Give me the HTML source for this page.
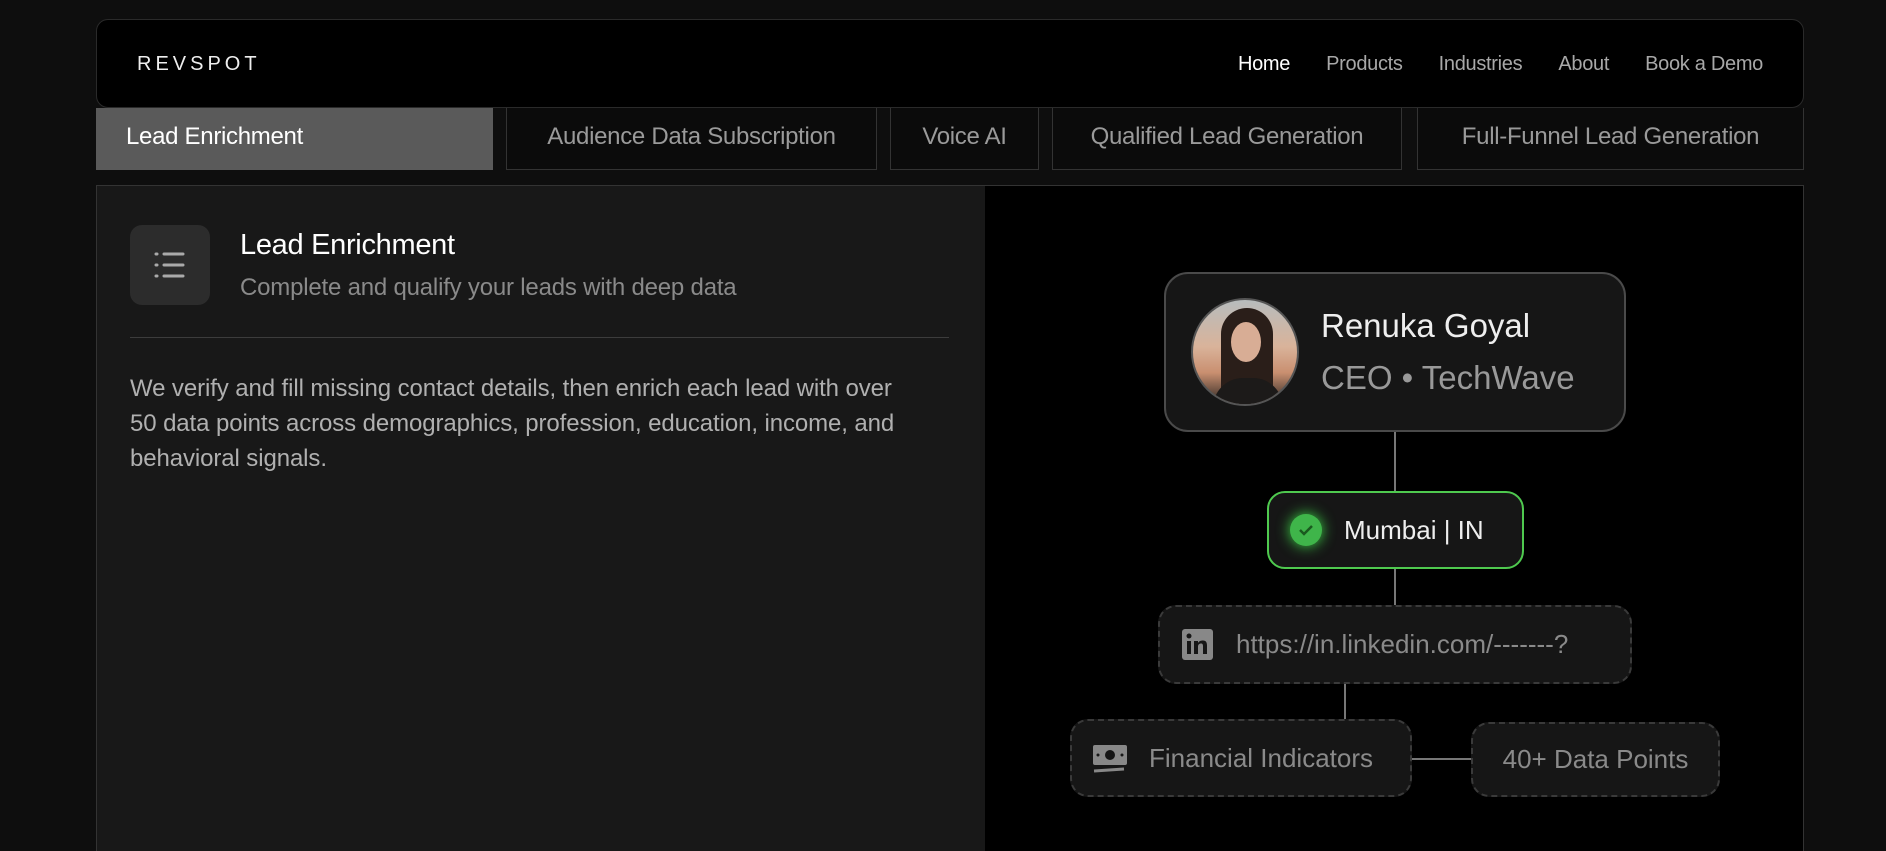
<!DOCTYPE html>
<html><head><meta charset="utf-8"><style>
*{margin:0;padding:0;box-sizing:border-box}
html,body{width:1886px;height:851px;overflow:hidden}
body{background:#0e0e0e;font-family:"Liberation Sans",sans-serif;position:relative;color:#fff}
.abs{position:absolute}
.nav{left:96px;top:19px;width:1708px;height:89px;background:#000;border:1px solid #2a2a2a;border-radius:12px}
.logo{left:40px;top:33px;font-size:20px;letter-spacing:4px;font-weight:300;color:#eee}
.links{right:40px;top:33px;font-size:20px;color:#a8a8a8;display:flex;gap:36px;letter-spacing:-0.3px}
.tab{top:108px;height:62px;border:1px solid #333;border-top:none;background:#0b0b0b;color:#9a9a9a;font-size:24px;display:flex;align-items:center;justify-content:center;letter-spacing:-0.3px;padding-bottom:4px}
.panel{left:96px;top:185px;width:1708px;height:700px;border:1px solid #333;background:#181818}
.right{left:985px;top:186px;width:818px;height:700px;background:#000}
.box{background:#161616;border-radius:18px}
.dash{border:2px dashed #3a3a3a;color:#8a8a8a;font-size:26px;display:flex;align-items:center}
.vl{background:#777;width:2px}
</style></head><body>
<div class="abs nav"><div class="abs logo">REVSPOT</div>
<div class="abs links"><span style="color:#fff">Home</span><span>Products</span><span>Industries</span><span>About</span><span>Book a Demo</span></div></div>
<div class="abs tab" style="left:96px;width:397px;background:#5a5a5a;border:none;color:#fff;justify-content:flex-start;padding-left:30px">Lead Enrichment</div>
<div class="abs tab" style="left:506px;width:371px">Audience Data Subscription</div>
<div class="abs tab" style="left:890px;width:149px">Voice AI</div>
<div class="abs tab" style="left:1052px;width:350px">Qualified Lead Generation</div>
<div class="abs tab" style="left:1417px;width:387px">Full-Funnel Lead Generation</div>
<div class="abs panel"></div>
<div class="abs right"></div>
<div class="abs" style="left:130px;top:225px;width:80px;height:80px;background:#2c2c2c;border-radius:12px">
<svg width="80" height="80" viewBox="0 0 80 80"><g stroke="#aaa" stroke-width="3" stroke-linecap="round"><line x1="26" y1="29" x2="27" y2="29"/><line x1="26" y1="40" x2="27" y2="40"/><line x1="26" y1="51" x2="27" y2="51"/><line x1="34" y1="29" x2="53" y2="29"/><line x1="34" y1="40" x2="53" y2="40"/><line x1="34" y1="51" x2="53" y2="51"/></g></svg></div>
<div class="abs" style="left:240px;top:229px;font-size:29px;letter-spacing:-0.3px">Lead Enrichment</div>
<div class="abs" style="left:240px;top:274px;font-size:24px;color:#8a8a8a;letter-spacing:-0.2px">Complete and qualify your leads with deep data</div>
<div class="abs" style="left:130px;top:337px;width:819px;height:1px;background:#3c3c3c"></div>
<div class="abs" style="left:130px;top:371px;width:770px;font-size:24px;line-height:35px;color:#b0b0b0;letter-spacing:-0.1px">We verify and fill missing contact details, then enrich each lead with over 50 data points across demographics, profession, education, income, and behavioral signals.</div>

<div class="abs vl" style="left:1394px;top:432px;height:59px"></div>
<div class="abs vl" style="left:1394px;top:569px;height:36px"></div>
<div class="abs vl" style="left:1344px;top:684px;height:36px"></div>
<div class="abs" style="left:1412px;top:758px;width:59px;height:2px;background:#777"></div>

<div class="abs box" style="left:1164px;top:272px;width:462px;height:160px;border:2px solid #4a4a4a;border-radius:24px"></div>
<div class="abs" style="left:1191px;top:298px;width:108px;height:108px;border-radius:50%;border:2px solid #555;overflow:hidden;background:linear-gradient(180deg,#b7bcbd 0%,#d9b39a 45%,#c98f70 70%,#2a2420 100%)">
<div class="abs" style="left:28px;top:8px;width:52px;height:100px;border-radius:26px 26px 10px 10px;background:#2a1e19"></div>
<div class="abs" style="left:38px;top:22px;width:30px;height:40px;border-radius:50%;background:#d8ad95"></div>
<div class="abs" style="left:20px;top:78px;width:70px;height:40px;border-radius:30px 30px 0 0;background:#1c1a19"></div>
</div>
<div class="abs" style="left:1321px;top:307px;font-size:33px;color:#eee">Renuka Goyal</div>
<div class="abs" style="left:1321px;top:359px;font-size:33px;color:#999">CEO • TechWave</div>

<div class="abs box" style="left:1267px;top:491px;width:257px;height:78px;border:2px solid #4fc94f;font-size:26px;display:flex;align-items:center;padding-left:75px;color:#eee">Mumbai | IN</div>
<div class="abs" style="left:1290px;top:514px;width:32px;height:32px;border-radius:50%;background:#3fb54a;box-shadow:0 0 14px #3fdc4a">
<svg width="32" height="32"><path d="M10 16l4 4 8-8" stroke="#1a5a1f" stroke-width="2.5" fill="none"/></svg></div>

<div class="abs box dash" style="left:1158px;top:605px;width:474px;height:79px;padding-left:76px">https://in.linkedin.com/-------?</div>
<div class="abs" style="left:1182px;top:629px;width:31px;height:31px;background:#888;border-radius:3px">
<svg width="31" height="31"><rect x="5" y="12" width="4" height="13" fill="#161616"/><circle cx="7" cy="7" r="2.5" fill="#161616"/><path d="M12 12h4v2c1-2 3-2.5 5-2.5 3 0 4 2 4 5V25h-4v-8c0-1.5-.5-2.5-2-2.5s-3 1-3 3V25h-4z" fill="#161616"/></svg></div>

<div class="abs box dash" style="left:1070px;top:719px;width:342px;height:78px;padding-left:77px">Financial Indicators</div>
<div class="abs" style="left:1092px;top:744px"><svg width="36" height="30"><rect x="1" y="1" width="34" height="20" rx="2" fill="#888"/><circle cx="18" cy="11" r="5" fill="#161616"/><circle cx="6" cy="11" r="1.5" fill="#161616"/><circle cx="30" cy="11" r="1.5" fill="#161616"/><path d="M2 27l30-2" stroke="#888" stroke-width="3"/></svg></div>
<div class="abs box dash" style="left:1471px;top:722px;width:249px;height:75px;justify-content:center">40+ Data Points</div>
</body></html>
